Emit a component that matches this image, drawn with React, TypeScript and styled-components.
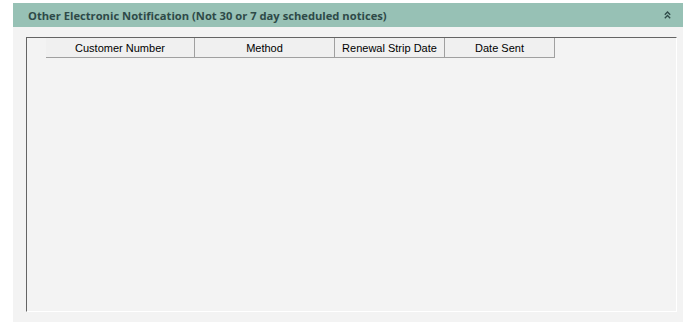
import React from "react";
import styled, { createGlobalStyle } from "styled-components";

const Global = createGlobalStyle`
  html, body { margin: 0; padding: 0; background: #ffffff; }
  body { font-family: "Liberation Sans", Arial, sans-serif; }
`;

const Page = styled.div`
  width: 700px;
  height: 329px;
  padding: 3px 17px 0 13px;
  box-sizing: border-box;
`;

const Panel = styled.section`
  width: 670px;
  height: 319px;
  background: #f3f3f3;
  display: flex;
  flex-direction: column;
`;

const Header = styled.div`
  height: 24px;
  background: #97c1b5;
  display: flex;
  align-items: center;
  justify-content: space-between;
  padding: 0 12px 0 15px;
  box-sizing: border-box;
`;

const Title = styled.span`
  font-family: "Open Sans", sans-serif;
  font-weight: 700;
  font-size: 11.2px;
  color: #2e4a48;
  letter-spacing: 0;
`;

const Body = styled.div`
  flex: 1;
  padding: 10px 6px 10px 13px;
  display: flex;
`;

const Grid = styled.div`
  flex: 1;
  border-top: 1px solid #646464;
  border-left: 1px solid #646464;
  border-right: 1px solid #ffffff;
  border-bottom: 1px solid #ffffff;
  padding-left: 19px;
`;

const HeaderRow = styled.div`
  display: flex;
  height: 20px;
`;

const HeadCell = styled.div<{ $w: number }>`
  width: ${(p) => p.$w}px;
  box-sizing: border-box;
  background: #f0f0f0;
  border-right: 1px solid #a0a0a0;
  border-bottom: 1px solid #a0a0a0;
  display: flex;
  align-items: center;
  justify-content: center;
  font-family: "Liberation Sans", Arial, sans-serif;
  font-size: 11px;
  color: #000;
`;

const columns: [string, number][] = [
  ["Customer Number", 149],
  ["Method", 140],
  ["Renewal Strip Date", 110],
  ["Date Sent", 110],
];

export default function App() {
  return (
    <>
      <Global />
      <Page>
        <Panel>
          <Header>
            <Title>Other Electronic Notification (Not 30 or 7 day scheduled notices)</Title>
            <svg width="7" height="8" viewBox="0 0 7 8" fill="none" stroke="#2e4a48" strokeWidth="1.3">
              <path d="M0.8 3.8 L3.5 1 L6.2 3.8" />
              <path d="M0.8 7.3 L3.5 4.5 L6.2 7.3" />
            </svg>
          </Header>
          <Body>
            <Grid>
              <HeaderRow>
                {columns.map(([label, w]) => (
                  <HeadCell key={label} $w={w}>
                    {label}
                  </HeadCell>
                ))}
              </HeaderRow>
            </Grid>
          </Body>
        </Panel>
      </Page>
    </>
  );
}
